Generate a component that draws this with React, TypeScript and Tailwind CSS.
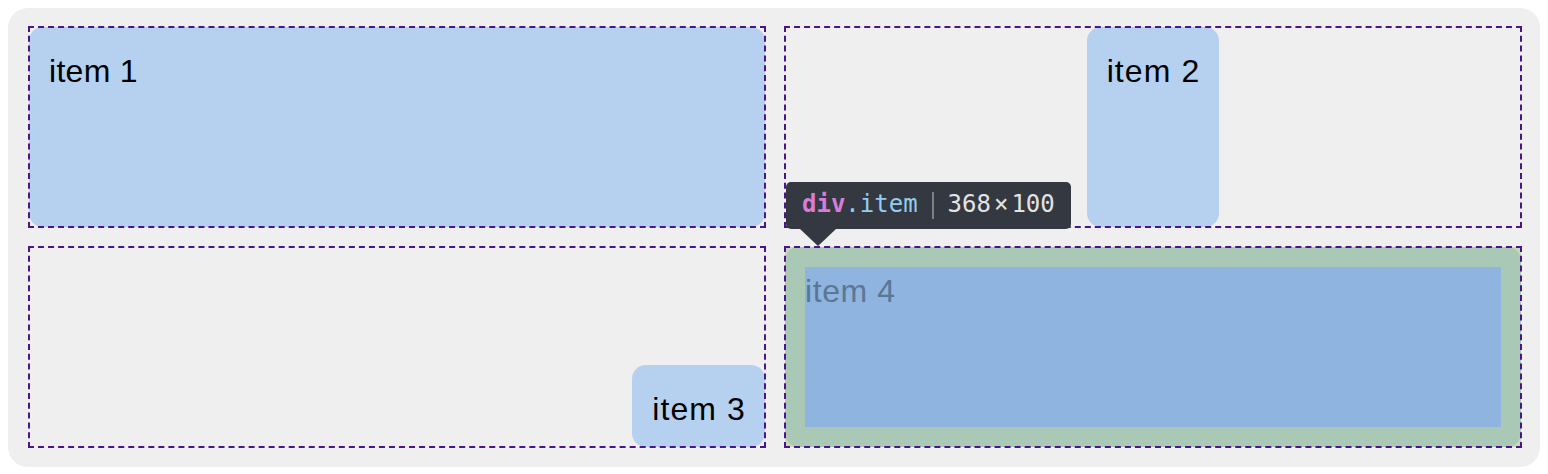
import React from "react";

const itemFont =
  "text-[32px] leading-[42px] text-black font-['Liberation_Sans',Arial,sans-serif]";

function Dashed() {
  return (
    <div className="pointer-events-none absolute -inset-px border-2 border-dashed border-[#4a148c]" />
  );
}

export default function App() {
  return (
    <div className="min-h-screen bg-white p-2">
      <div className="relative grid grid-cols-[736px_736px] grid-rows-[200px_200px] gap-5 rounded-[20px] bg-[#efefef] pb-[20px] pl-[21px] pr-[19px] pt-[19px]">
        {/* cell 1 */}
        <div className="relative flex">
          <div className={`w-full rounded-[14px] bg-[#b6d1ef] pl-5 pr-[19px] pt-[23px] tracking-[0.3px] ${itemFont}`}>item 1</div>
          <Dashed />
        </div>
        {/* cell 2 */}
        <div className="relative flex justify-center">
          <div className={`h-full rounded-[14px] bg-[#b6d1ef] pl-5 pr-[19px] pt-[23px] tracking-[1.1px] ${itemFont}`}>item 2</div>
          <Dashed />
        </div>
        {/* cell 3 */}
        <div className="relative flex items-end justify-end">
          <div className={`rounded-[14px] bg-[#b6d1ef] pb-[17px] pl-5 pr-[19px] pt-[23px] tracking-[1.1px] ${itemFont}`}>item 3</div>
          <Dashed />
        </div>
        {/* cell 4 (highlighted) */}
        <div className="relative flex bg-[#c8d9b8]">
          <div className="h-full w-full rounded-[14px] bg-[#aac8b6] p-5">
            <div className="h-full bg-[#8fb4e0] pt-[3px] font-['Liberation_Sans',Arial,sans-serif] text-[32px] leading-[42px] tracking-[0.6px] text-[#5a7794]">
              item 4
            </div>
          </div>
          <Dashed />
        </div>

        {/* tooltip */}
        <div className="absolute left-[778px] top-[174px]">
          <div className="flex h-[47px] items-center rounded-[5px] bg-[#343841] pb-[3px] pl-[16px] pr-[16px] font-['DejaVu_Sans_Mono',monospace] text-[24px] leading-none">
            <span className="font-bold text-[#d97bd9]">div</span>
            <span className="text-[#93cdf0]">.item</span>
            <span className="mx-[14px] mt-[3px] h-[27px] w-[2px] bg-[#7d8087]" />
            <span className="text-[#e3e3e3]">
              368<span className="mx-[3px]">×</span>100
            </span>
          </div>
          <div className="ml-[14px] h-0 w-0 border-l-[18px] border-r-[18px] border-t-[17px] border-l-transparent border-r-transparent border-t-[#343841]" />
        </div>
      </div>
    </div>
  );
}
